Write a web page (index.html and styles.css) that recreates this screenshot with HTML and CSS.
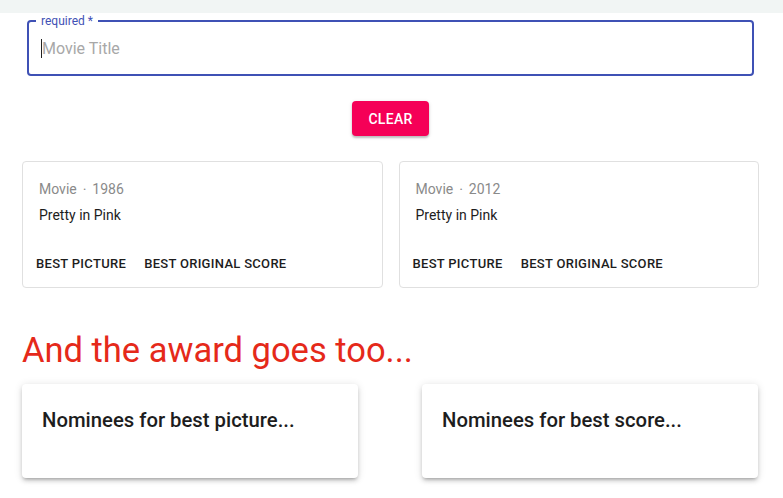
FILE: index.html
```html
<!DOCTYPE html>
<html>
<head>
<meta charset="utf-8">
<link rel="stylesheet" href="styles.css">
</head>
<body>
<div class="topbar"></div>
<main class="page">
  <div class="field">
    <span class="label">required *</span>
    <span class="caret"></span><span class="placeholder">Movie Title</span>
  </div>
  <div class="actions"><button class="clear">CLEAR</button></div>
  <div class="results">
    <div class="card">
      <div class="meta">Movie <span class="dot">•</span> 1986</div>
      <div class="title">Pretty in Pink</div>
      <div class="btns"><span class="tb">BEST PICTURE</span><span class="tb">BEST ORIGINAL SCORE</span></div>
    </div>
    <div class="card">
      <div class="meta">Movie <span class="dot">•</span> 2012</div>
      <div class="title">Pretty in Pink</div>
      <div class="btns"><span class="tb">BEST PICTURE</span><span class="tb">BEST ORIGINAL SCORE</span></div>
    </div>
  </div>
  <h1 class="heading">And the award goes too...</h1>
  <div class="noms">
    <div class="nom">Nominees for best picture...</div>
    <div class="nom">Nominees for best score...</div>
  </div>
</main>
</body>
</html>
```
FILE: styles.css
```css
html, body { margin: 0; padding: 0; background: #fff; }
body { font-family: Roboto, "Noto Sans", sans-serif; color: rgba(0,0,0,0.87); overflow: hidden; min-height: 498px; }
.topbar { height: 13px; background: #f1f5f4; }
.page { padding: 0 24px 21px 22px; }
.field {
  position: relative;
  margin: 7px 5px 0 5px;
  height: 56px;
  box-sizing: border-box;
  border: 2px solid #3f51b5;
  border-radius: 4px;
  display: flex;
  align-items: center;
  padding-left: 12px;
}
.label {
  position: absolute;
  top: -9px; left: 7px;
  padding: 0 5px;
  background: #fff;
  font-size: 12px;
  line-height: 16px;
  color: #3f51b5;
}
.caret { width: 1px; height: 19px; background: #222; }
.placeholder { font-size: 16px; color: #a8a8a8; margin-top: 1px; }
.actions { display: flex; justify-content: center; margin-top: 25px; }
.clear {
  width: 77px; height: 35px;
  border: 0; border-radius: 4px;
  background: #f50057; color: #fff;
  font-family: Roboto, sans-serif; font-weight: 500; font-size: 14px;
  letter-spacing: 0.3px;
  box-shadow: 0 2px 2px rgba(0,0,0,0.2), 0 1px 4px rgba(0,0,0,0.12);
}
.results { display: flex; gap: 16px; margin-top: 25px; }
.card {
  flex: 1 1 0;
  height: 127px;
  box-sizing: border-box;
  border: 1px solid #e0e0e0;
  border-radius: 4px;
  padding: 18px 16px 0 16px;
  display: flex; flex-direction: column;
}
.meta { font-size: 14px; color: #8a8a8a; line-height: 18px; }
.dot { font-size: 8px; vertical-align: 2px; margin: 0 3px; }
.title { font-size: 14px; line-height: 18px; margin-top: 7px; color: #1d1d1d; }
.btns { display: flex; gap: 18px; margin-top: 32px; margin-left: -3px; }
.tb { font-size: 13px; font-weight: 500; letter-spacing: 0.3px; color: #1d1d1d; }
.heading {
  margin: 40px 0 0 0;
  font-size: 34.5px; font-weight: 400;
  line-height: 44px;
  color: #e5291a;
}
.noms { display: flex; gap: 64px; margin-top: 12px; }
.nom {
  flex: 0 0 336px;
  height: 94px;
  box-sizing: border-box;
  border-radius: 4px;
  background: #fff;
  box-shadow: 0 3px 3px -2px rgba(0,0,0,0.2), 0 3px 4px 0 rgba(0,0,0,0.14), 0 1px 8px 0 rgba(0,0,0,0.12);
  padding: 24px 20px;
  font-size: 20.3px; font-weight: 500; color: #1d1d1d;
  line-height: 24px;
}
```
